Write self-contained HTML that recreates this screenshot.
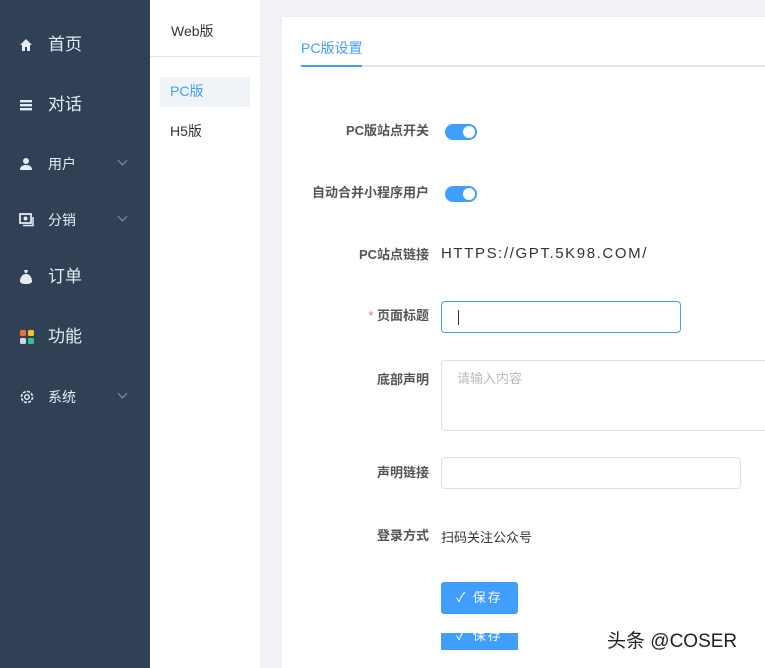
<!DOCTYPE html>
<html><head><meta charset="utf-8"><style>
*{margin:0;padding:0;box-sizing:border-box}
html,body{width:765px;height:668px;overflow:hidden;background:#f0f2f5;font-family:"Liberation Sans","Noto Sans CJK SC",sans-serif;position:relative}
.sb{position:absolute;left:0;top:0;width:150px;height:668px;background:#304156}
.ic{position:absolute;left:19px}
.tx{position:absolute;left:48px;color:#e6ecf3;white-space:nowrap;line-height:20px}
.arr{position:absolute;left:119px;width:7px;height:7px;border-right:1px solid #8a96a6;border-bottom:1px solid #8a96a6;transform:rotate(45deg)}
.p2{position:absolute;left:150px;top:0;width:110px;height:668px;background:#fff}
.card{position:absolute;left:281px;top:16px;width:490px;height:660px;background:#fff;border:1px solid #ebeef5}
.lab{position:absolute;right:336px;font-size:13px;font-weight:bold;color:#555;white-space:nowrap;line-height:18px}
.sw{position:absolute;left:445px;width:32px;height:16px;border-radius:8px;background:#409eff}
.sw::after{content:"";position:absolute;right:2px;top:2px;width:12px;height:12px;border-radius:50%;background:#fff}
.inp{position:absolute;left:441px;background:#fff;border:1px solid #dcdfe6;border-radius:4px}
.btn{position:absolute;left:441px;width:77px;height:32px;background:#409eff;border-radius:3px;color:#fff;font-size:13px;text-align:center;line-height:32px;letter-spacing:2px}
</style></head><body>
<div class="sb">
 <svg class="ic" style="top:38px" width="14" height="14" viewBox="0 0 14 14"><path d="M7 1L1 7h2v6h3V9h2v4h3V7h2z" fill="#e6ecf3"/></svg><span class="tx" style="top:35px;font-size:17px">首页</span>
 <svg class="ic" style="top:98px" width="14" height="14" viewBox="0 0 14 14"><rect x="1" y="2" width="12" height="2.4" fill="#e6ecf3"/><rect x="1" y="6" width="12" height="2.4" fill="#e6ecf3"/><rect x="1" y="10" width="12" height="2.4" fill="#e6ecf3"/></svg><span class="tx" style="top:95px;font-size:17px">对话</span>
 <svg class="ic" style="top:157px" width="14" height="14" viewBox="0 0 14 14"><circle cx="7" cy="4" r="3" fill="#e6ecf3"/><path d="M1 13c0-4 3-5 6-5s6 1 6 5z" fill="#e6ecf3"/></svg><span class="tx" style="top:154px;font-size:14px">用户</span>
 <div class="arr" style="top:157px"></div>
 <svg class="ic" style="top:213px" width="15" height="14" viewBox="0 0 15 14"><rect x="1" y="1" width="11" height="9" fill="none" stroke="#e6ecf3" stroke-width="1.8"/><circle cx="6.5" cy="5.5" r="2" fill="#e6ecf3"/><path d="M4 12.5h10V4" fill="none" stroke="#e6ecf3" stroke-width="1.5"/></svg><span class="tx" style="top:210px;font-size:14px">分销</span>
 <div class="arr" style="top:213px"></div>
 <svg class="ic" style="top:269px" width="14" height="16" viewBox="0 0 14 16"><path d="M5 1h4l-1 3h-2z" fill="#e6ecf3"/><path d="M7 5c-4 0-6 4-6 7 0 2 2 3 6 3s6-1 6-3c0-3-2-7-6-7z" fill="#e6ecf3"/></svg><span class="tx" style="top:267px;font-size:17px">订单</span>
 <svg class="ic" style="top:329px" width="16" height="16" viewBox="0 0 16 16"><rect x="1" y="1" width="6" height="6" rx="1.5" fill="#f56c3c"/><rect x="9" y="1" width="6" height="6" rx="1.5" fill="#f2c230"/><rect x="1" y="9" width="6" height="6" rx="1.5" fill="#d0d5e0"/><rect x="9" y="9" width="6" height="6" rx="1.5" fill="#35c28c"/></svg><span class="tx" style="top:327px;font-size:17px">功能</span>
 <svg class="ic" style="top:389px" width="16" height="16" viewBox="0 0 16 16"><circle cx="8" cy="8" r="5.5" fill="none" stroke="#e6ecf3" stroke-width="1.6" stroke-dasharray="3 1.3"/><circle cx="8" cy="8" r="2.3" fill="none" stroke="#e6ecf3" stroke-width="1.4"/></svg><span class="tx" style="top:387px;font-size:14px">系统</span>
 <div class="arr" style="top:390px"></div>
</div>
<div class="p2">
 <div style="height:57px;border-bottom:1px solid #e6e6e6;font-size:14px;color:#333;padding:21px 0 0 21px">Web版</div>
 <div style="position:absolute;left:10px;top:77px;width:90px;height:30px;background:#f0f4f8;color:#409eff;font-size:14px;line-height:28px;padding-left:10px">PC版</div>
 <div style="position:absolute;left:20px;top:121px;font-size:14px;color:#333">H5版</div>
</div>
<div class="card"></div>
<div style="position:absolute;left:301px;top:38px;font-size:14px;color:#409eff">PC版设置</div>
<div style="position:absolute;left:301px;top:65px;width:464px;height:2px;background:#e4e7ed"></div>
<div style="position:absolute;left:301px;top:65px;width:61px;height:2px;background:#409eff"></div>
<div class="lab" style="top:122px">PC版站点开关</div><div class="sw" style="top:124px"></div>
<div class="lab" style="top:184px">自动合并小程序用户</div><div class="sw" style="top:186px"></div>
<div class="lab" style="top:246px">PC站点链接</div>
<div style="position:absolute;left:441px;top:245px;font-size:15px;color:#333;letter-spacing:1.6px">HTTPS://GPT.5K98.COM/</div>
<div class="lab" style="top:307px"><span style="color:#f56c6c;font-weight:normal">* </span>页面标题</div>
<div class="inp" style="top:301px;width:240px;height:32px;border-color:#409eff"><div style="position:absolute;left:16px;top:8px;width:1px;height:15px;background:#333"></div></div>
<div class="lab" style="top:371px">底部声明</div>
<div class="inp" style="top:360px;width:330px;height:71px"><span style="position:absolute;left:15px;top:7px;font-size:13px;color:#bbb">请输入内容</span></div>
<div class="lab" style="top:464px">声明链接</div>
<div class="inp" style="top:457px;width:300px;height:32px"></div>
<div class="lab" style="top:527px">登录方式</div>
<div style="position:absolute;left:441px;top:527px;font-size:13px;color:#333">扫码关注公众号</div>
<div class="btn" style="top:582px">✓ 保存</div>
<div style="position:absolute;left:441px;top:633px;width:77px;height:17px;overflow:hidden"><div class="btn" style="left:0;top:-13px">✓ 保存</div></div>
<div style="position:absolute;left:607px;top:626px;font-size:19px;color:#222;text-shadow:0 0 2px #fff,0 0 2px #fff">头条 @COSER</div>
</body></html>
